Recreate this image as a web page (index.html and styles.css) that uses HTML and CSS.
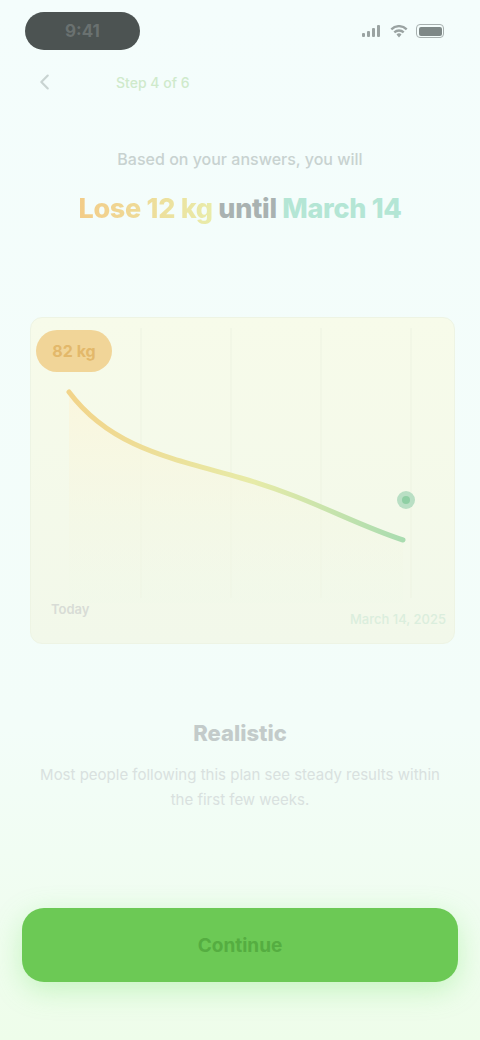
FILE: index.html
```html
<!DOCTYPE html>
<html lang="en">
<head>
<meta charset="utf-8">
<title>Prediction</title>
<link rel="stylesheet" href="styles.css">
</head>
<body>
<div class="screen">
  <div class="status">
    <div class="time-pill">9:41</div>
    <div class="status-icons">
      <svg width="20" height="12" viewBox="0 0 20 12"><rect x="0" y="8" width="3" height="4" rx="1" fill="#9aa3a2"/><rect x="5" y="6" width="3" height="6" rx="1" fill="#9aa3a2"/><rect x="10" y="3" width="3" height="9" rx="1" fill="#9aa3a2"/><rect x="15" y="0" width="3" height="12" rx="1" fill="#9aa3a2"/></svg>
      <svg width="18" height="13" viewBox="0 0 18 13"><path d="M9 12.5l2.5-3a3.5 3.5 0 0 0-5 0z M3.5 6.5a8 8 0 0 1 11 0l-1.6 1.8a5.5 5.5 0 0 0-7.8 0z M0.5 3.5a12 12 0 0 1 17 0l-1.6 1.8a9.5 9.5 0 0 0-13.8 0z" fill="#9aa3a2"/></svg>
      <div class="battery"><div class="battery-fill"></div></div>
    </div>
  </div>

  <div class="nav">
    <svg class="back" width="22" height="22" viewBox="0 0 24 24"><path d="M15 5l-7 7 7 7" fill="none" stroke="#c9d4d2" stroke-width="2.4" stroke-linecap="round" stroke-linejoin="round"/></svg>
    <div class="nav-label">Step 4 of 6</div>
  </div>

  <div class="headline">
    <p class="sub">Based on your answers, you will</p>
    <h1 class="goal"><span class="grad">Lose 12 kg</span> <span class="dark">until</span> <span class="teal">March 14</span></h1>
  </div>

  <div class="chart-card">
    <svg class="chart" width="425" height="327" viewBox="0 0 425 327">
      <defs>
        <linearGradient id="ln" x1="0" y1="0" x2="1" y2="0">
          <stop offset="0" stop-color="#f2d48a"/>
          <stop offset="0.55" stop-color="#e7eba8"/>
          <stop offset="1" stop-color="#a9dcb0"/>
        </linearGradient>
        <linearGradient id="area" x1="0" y1="0" x2="0" y2="1">
          <stop offset="0" stop-color="#fbf6dc" stop-opacity="0.9"/>
          <stop offset="1" stop-color="#f0f8e9" stop-opacity="0.3"/>
        </linearGradient>
      </defs>
      <g stroke="#eef3e2" stroke-width="1">
        <line x1="110" y1="10" x2="110" y2="280"/>
        <line x1="200" y1="10" x2="200" y2="280"/>
        <line x1="290" y1="10" x2="290" y2="280"/>
        <line x1="380" y1="10" x2="380" y2="280"/>
      </g>
      <path d="M38 74 C80 130 140 140 210 160 S320 205 372 222 L372 285 L38 285 Z" fill="url(#area)"/>
      <path d="M38 74 C80 130 140 140 210 160 S320 205 372 222" fill="none" stroke="url(#ln)" stroke-width="5" stroke-linecap="round"/>
      <circle cx="375" cy="182" r="9" fill="#b9dfc4"/>
      <circle cx="375" cy="182" r="4" fill="#8fcfa4"/>
    </svg>
    <div class="badge">82 kg</div>
    <div class="axis">
      <span class="ax-left">Today</span>
      <span class="ax-right">March 14, 2025</span>
    </div>
  </div>

  <div class="info">
    <h2>Realistic</h2>
    <p>Most people following this plan see steady results within the first few weeks.</p>
  </div>

  <div class="footer">
    <button class="cta">Continue</button>
  </div>
</div>
</body>
</html>
```

FILE: styles.css
```css
* { box-sizing: border-box; }
html, body { margin: 0; padding: 0; }
body {
  width: 480px;
  height: 1040px;
  background: #f3fdfb;
  font-family: Inter, "Noto Sans", "Liberation Sans", sans-serif;
  overflow: hidden;
}
.screen {
  height: 1040px;
  display: flex;
  flex-direction: column;
  background: linear-gradient(180deg, #f4fdfc 0%, #f3fdf9 70%, #eefdea 100%);
}
.status {
  height: 60px;
  padding: 12px 30px 0 25px;
  display: flex;
  justify-content: space-between;
  align-items: flex-start;
}
.time-pill {
  width: 115px;
  height: 38px;
  border-radius: 19px;
  background: #4c5352;
  color: #6a7170;
  font-weight: 700;
  font-size: 17px;
  display: flex;
  align-items: center;
  justify-content: center;
}
.status-icons {
  display: flex;
  align-items: center;
  gap: 8px;
  margin-top: 12px;
  padding-right: 6px;
}
.battery {
  width: 28px;
  height: 14px;
  border-radius: 4px;
  border: 1.5px solid #a7b0af;
  padding: 1.5px;
}
.battery-fill {
  width: 100%;
  height: 100%;
  border-radius: 2px;
  background: #7e8887;
}
.nav {
  height: 44px;
  display: flex;
  align-items: center;
  padding: 0 0 0 34px;
  gap: 60px;
}
.nav-label {
  font-size: 14px;
  color: #cfeacb;
  font-weight: 500;
}
.headline {
  margin-top: 45px;
  text-align: center;
}
.sub {
  margin: 0;
  font-size: 16px;
  color: #c8d2d0;
  font-weight: 500;
}
.goal {
  margin: 23px 0 0;
  font-size: 27px;
  font-weight: 800;
  letter-spacing: -0.3px;
}
.grad {
  background: linear-gradient(90deg, #f3cc88, #e9ecaa);
  -webkit-background-clip: text;
  background-clip: text;
  color: transparent;
}
.dark { color: #a9b2b1; }
.teal { color: #b4e6d5; }
.chart-card {
  position: relative;
  margin: 92px 25px 0 30px;
  height: 327px;
  border-radius: 12px;
  background: linear-gradient(180deg, #f7fbea 0%, #f2f8ea 100%);
  border: 1px solid #eef4e4;
}
.chart { display: block; }
.badge {
  position: absolute;
  left: 5px;
  top: 12px;
  width: 76px;
  height: 42px;
  border-radius: 21px;
  background: #f1d598;
  color: #e3b86a;
  font-weight: 700;
  font-size: 16px;
  display: flex;
  align-items: center;
  justify-content: center;
}
.axis {
  position: absolute;
  left: 20px;
  right: 8px;
  bottom: 26px;
  display: flex;
  justify-content: space-between;
  align-items: flex-end;
  font-size: 13px;
}
.ax-left { color: #d8dcd6; font-weight: 600; }
.ax-right { color: #dbeedd; font-weight: 500; margin-bottom: -10px; }
.info {
  margin-top: 76px;
  text-align: center;
  padding: 0 38px;
}
.info h2 {
  margin: 0;
  font-size: 22px;
  font-weight: 800;
  color: #c3cbca;
}
.info p {
  margin: 16px 0 0;
  font-size: 15px;
  line-height: 25px;
  color: #d9e1df;
}
.footer {
  margin-top: auto;
  padding: 0 22px 58px;
}
.cta {
  width: 100%;
  height: 74px;
  border: none;
  border-radius: 22px;
  background: #6cc955;
  color: #55ad41;
  font-family: inherit;
  font-size: 19px;
  font-weight: 700;
  box-shadow: 0 8px 28px rgba(120, 230, 110, 0.35);
}
```
